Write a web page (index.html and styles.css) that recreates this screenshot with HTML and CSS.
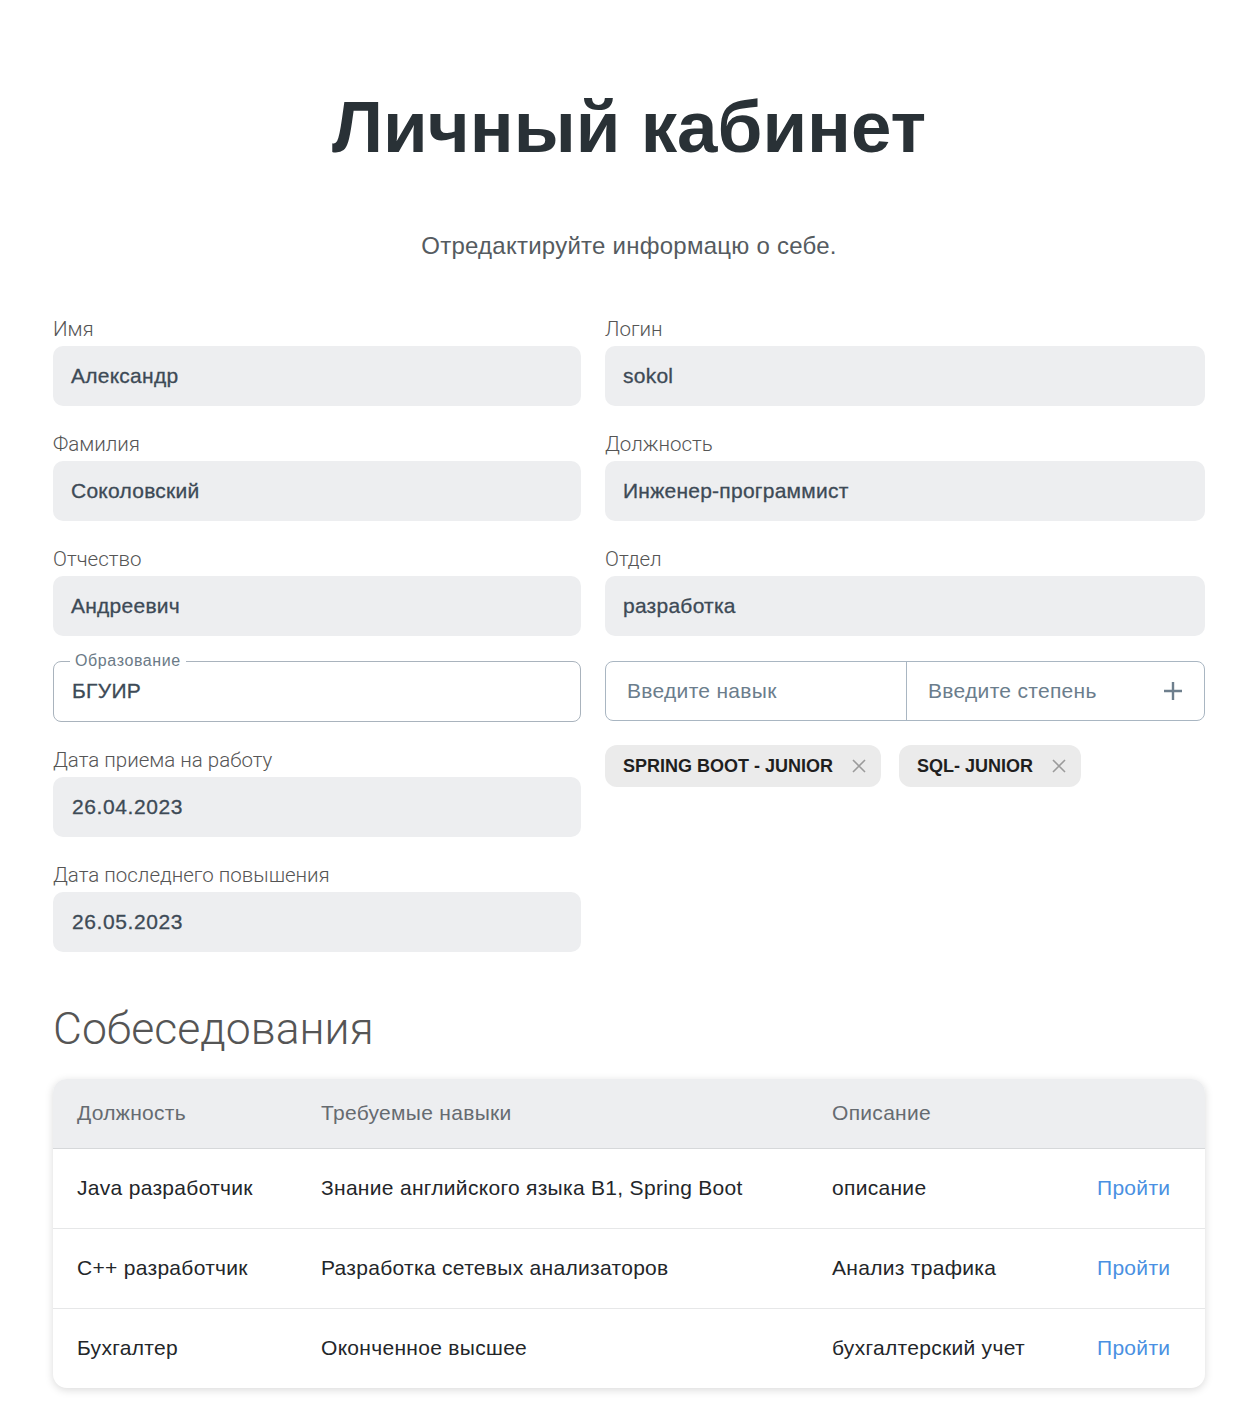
FILE: index.html
```html
<!DOCTYPE html>
<html lang="ru">
<head>
<meta charset="utf-8">
<title>Личный кабинет</title>
<link rel="stylesheet" href="styles.css">
</head>
<body>
<main class="page">
  <h1 class="title">Личный кабинет</h1>
  <p class="subtitle">Отредактируйте информацю о себе.</p>

  <div class="form-grid">
    <div class="col col-left">
      <div class="field">
        <label class="label">Имя</label>
        <div class="input">Александр</div>
      </div>
      <div class="field">
        <label class="label">Фамилия</label>
        <div class="input">Соколовский</div>
      </div>
      <div class="field">
        <label class="label">Отчество</label>
        <div class="input">Андреевич</div>
      </div>
      <fieldset class="outlined">
        <legend class="legend">Образование</legend>
        <div class="outlined-value">БГУИР</div>
      </fieldset>
      <div class="field">
        <label class="label">Дата приема на работу</label>
        <div class="input input-date">26.04.2023</div>
      </div>
      <div class="field">
        <label class="label">Дата последнего повышения</label>
        <div class="input input-date">26.05.2023</div>
      </div>
    </div>

    <div class="col col-right">
      <div class="field">
        <label class="label">Логин</label>
        <div class="input">sokol</div>
      </div>
      <div class="field">
        <label class="label">Должность</label>
        <div class="input">Инженер-программист</div>
      </div>
      <div class="field">
        <label class="label">Отдел</label>
        <div class="input">разработка</div>
      </div>
      <div class="skill-group">
        <div class="skill-cell">Введите навык</div>
        <div class="skill-cell skill-cell-last">
          <span>Введите степень</span>
          <svg class="plus" width="22" height="22" viewBox="0 0 22 22"><path d="M11 2v18M2 11h18" stroke="#6e7f8d" stroke-width="2.4" fill="none"/></svg>
        </div>
      </div>
      <div class="chips">
        <div class="chip">
          <span>SPRING BOOT - JUNIOR</span>
          <svg class="chip-x" width="16" height="16" viewBox="0 0 16 16"><path d="M2 2l12 12M14 2L2 14" stroke="#9b9b9b" stroke-width="1.6" fill="none"/></svg>
        </div>
        <div class="chip">
          <span>SQL- JUNIOR</span>
          <svg class="chip-x" width="16" height="16" viewBox="0 0 16 16"><path d="M2 2l12 12M14 2L2 14" stroke="#9b9b9b" stroke-width="1.6" fill="none"/></svg>
        </div>
      </div>
    </div>
  </div>

  <h2 class="section-title">Собеседования</h2>

  <div class="table-card">
    <table class="table">
      <colgroup>
        <col class="c1"><col class="c2"><col class="c3"><col class="c4">
      </colgroup>
      <thead>
        <tr><th>Должность</th><th>Требуемые навыки</th><th>Описание</th><th></th></tr>
      </thead>
      <tbody>
        <tr><td>Java разработчик</td><td>Знание английского языка B1, Spring Boot</td><td>описание</td><td><a class="link" href="#">Пройти</a></td></tr>
        <tr><td>C++ разработчик</td><td>Разработка сетевых анализаторов</td><td>Анализ трафика</td><td><a class="link" href="#">Пройти</a></td></tr>
        <tr><td>Бухгалтер</td><td>Оконченное высшее</td><td>бухгалтерский учет</td><td><a class="link" href="#">Пройти</a></td></tr>
      </tbody>
    </table>
  </div>
</main>
</body>
</html>
```

FILE: styles.css
```css
* { box-sizing: border-box; }

html, body {
  margin: 0;
  padding: 0;
  background: #ffffff;
}

body {
  font-family: "Liberation Sans", Arial, sans-serif;
  color: #222;
}

.page {
  width: 1152px;
  margin-left: 53px;
  padding-bottom: 14px;
}

.title {
  margin: 91px 0 0;
  font-size: 72.7px;
  line-height: 72px;
  font-weight: 700;
  color: #293136;
  text-align: center;
}

.subtitle {
  margin: 69px 0 0;
  font-size: 24px;
  line-height: 28px;
  color: #555b60;
  text-align: center;
  letter-spacing: 0.25px;
}

.form-grid {
  display: grid;
  grid-template-columns: 528px 600px;
  column-gap: 24px;
  margin-top: 57px;
  align-items: start;
}

.col {
  display: flex;
  flex-direction: column;
}

.field {
  display: flex;
  flex-direction: column;
  gap: 5px;
  margin-bottom: 26px;
}

.label {
  font-family: "Roboto", "Liberation Sans", sans-serif;
  font-weight: 300;
  font-size: 20.5px;
  line-height: 24px;
  color: #555;
}

.input {
  height: 60px;
  border-radius: 10px;
  background: #edeef0;
  padding: 0 18px;
  display: flex;
  align-items: center;
  font-size: 21px;
  letter-spacing: 0.25px;
  color: #3d4a56;
  -webkit-text-stroke: 0.3px #3d4a56;
}

.input-date {
  padding-left: 19px;
  letter-spacing: 0.6px;
}

.outlined {
  margin: -12px 0 26px;
  padding: 0 18px;
  height: 72px;
  border: 1px solid #a9b3bd;
  border-radius: 8px;
}

.legend {
  padding: 0 5px;
  margin-left: -2px;
  font-size: 16px;
  line-height: 22px;
  color: #6b7a87;
  letter-spacing: 0.6px;
}

.outlined-value {
  font-size: 21px;
  line-height: 24px;
  letter-spacing: 0.3px;
  color: #3d4a56;
  -webkit-text-stroke: 0.3px #3d4a56;
  margin-top: 7px;
}

.skill-group {
  display: grid;
  grid-template-columns: 300px 300px;
  height: 60px;
  border: 1px solid #a9b6c2;
  border-radius: 8px;
  margin-top: -1px;
}

.skill-cell {
  display: flex;
  align-items: center;
  padding: 0 20px 0 21px;
  font-size: 21px;
  letter-spacing: 0.3px;
  color: #6b7d8c;
}

.skill-cell-last {
  border-left: 1px solid #a9b6c2;
  justify-content: space-between;
  padding-right: 22px;
}

.plus { display: block; }

.chips {
  display: flex;
  gap: 18px;
  margin-top: 24px;
}

.chip {
  display: flex;
  align-items: center;
  gap: 18px;
  height: 42px;
  padding: 0 14px 0 18px;
  border-radius: 12px;
  background: #ebebeb;
  font-size: 18px;
  font-weight: 700;
  color: #1f1f1f;
}

.chip-x { display: block; }

.section-title {
  margin: 25px 0 0;
  font-family: "Roboto", "Liberation Sans", sans-serif;
  font-weight: 300;
  font-size: 44.5px;
  line-height: 52px;
  color: #555;
}

.table-card {
  margin-top: 24px;
  border-radius: 14px;
  overflow: hidden;
  background: #fff;
  box-shadow: 0 2px 8px rgba(0, 0, 0, 0.15);
}

.table {
  width: 100%;
  border-collapse: collapse;
  table-layout: fixed;
}

.c1 { width: 244px; }
.c2 { width: 511px; }
.c3 { width: 265px; }
.c4 { width: 132px; }

.table th {
  height: 69px;
  padding: 0 0 0 24px;
  background: #edeef0;
  border-bottom: 1px solid #d6d8da;
  text-align: left;
  font-weight: 400;
  font-size: 21px;
  letter-spacing: 0.3px;
  color: #666b70;
}

.table td {
  height: 80px;
  padding: 0 0 0 24px;
  font-size: 21px;
  letter-spacing: 0.3px;
  color: #232629;
  border-bottom: 1px solid #e6e7e8;
}

.table tbody tr:last-child td { border-bottom: none; }

.link {
  color: #4a90e2;
  text-decoration: none;
}
```
